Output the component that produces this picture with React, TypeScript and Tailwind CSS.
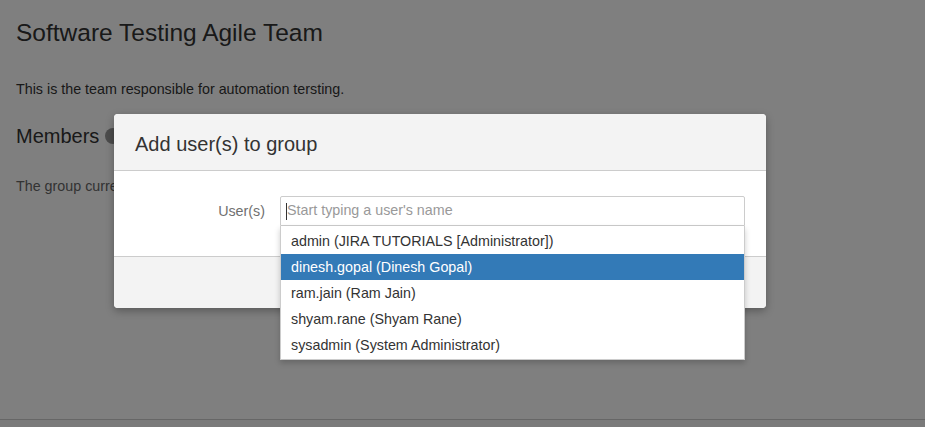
import React from 'react';

const users = [
  'admin (JIRA TUTORIALS [Administrator])',
  'dinesh.gopal (Dinesh Gopal)',
  'ram.jain (Ram Jain)',
  'shyam.rane (Shyam Rane)',
  'sysadmin (System Administrator)',
];

const App: React.FC = () => {
  return (
    <div className="relative h-[427px] w-full overflow-hidden bg-white font-['Liberation_Sans',Arial,sans-serif] text-[#333]">
      {/* Page behind the dialog */}
      <div className="px-4 pt-[18px]">
        <h1 className="text-[24.5px] leading-[30px]">Software Testing Agile Team</h1>
        <p className="mt-[31px] text-[14.3px] leading-[20px]">This is the team responsible for automation tersting.</p>
        <div className="mt-[24px] flex items-center gap-[6px]">
          <h2 className="text-[20px] leading-[26px]">Members</h2>
          <span className="h-[16px] w-[16px] rounded-full bg-[#999]"></span>
        </div>
        <p className="mt-[27px] text-[14.3px] leading-[20px] text-[#666]">The group currently has no members.</p>
      </div>
      <div className="absolute bottom-0 left-0 right-0 h-[8px] border-t border-[#ccc] bg-[#f5f5f5]"></div>

      {/* Backdrop */}
      <div className="absolute inset-0 bg-black/50"></div>

      {/* Dialog */}
      <div className="absolute left-[114px] top-[114px] w-[652px] rounded-[4px] bg-white shadow-[0_3px_9px_rgba(0,0,0,0.3)]">
        <div className="flex h-[57px] items-center rounded-t-[4px] border-b border-[#ccc] bg-[#f3f3f3] px-[21px] pt-[4px]">
          <h3 className="text-[20px] leading-[26px] text-[#333]">Add user(s) to group</h3>
        </div>
        <div className="h-[86px] border-b border-[#ccc]"></div>
        <div className="h-[51px] rounded-b-[4px] bg-[#f3f3f3]"></div>
      </div>

      {/* Field row with dropdown */}
      <div className="absolute left-[114px] top-[196px] flex w-[652px] items-start">
        <label className="w-[166px] pr-[15px] text-right text-[14.3px] leading-[30px] text-[#707070]">User(s)</label>
        <div className="w-[465px]">
          <div className="flex h-[30px] items-center rounded-t-[2px] border border-[#ccc] bg-white px-[5px]">
            <span className="h-[17px] w-px bg-[#333]"></span>
            <span className="text-[14.3px] text-[#999]">Start typing a user's name</span>
          </div>
          <ul className="border border-t-0 border-[#ccc] bg-white pt-[2px] pb-[1px] shadow-[0_3px_6px_rgba(0,0,0,0.2)]">
            {users.map((u, i) => (
              <li
                key={u}
                className={
                  i === 1
                    ? 'h-[26px] bg-[#337ab7] px-[10px] text-[14.3px] leading-[26px] text-white'
                    : 'h-[26px] px-[10px] text-[14.3px] leading-[26px] text-[#333]'
                }
              >
                {u}
              </li>
            ))}
          </ul>
        </div>
      </div>
    </div>
  );
};

export default App;
